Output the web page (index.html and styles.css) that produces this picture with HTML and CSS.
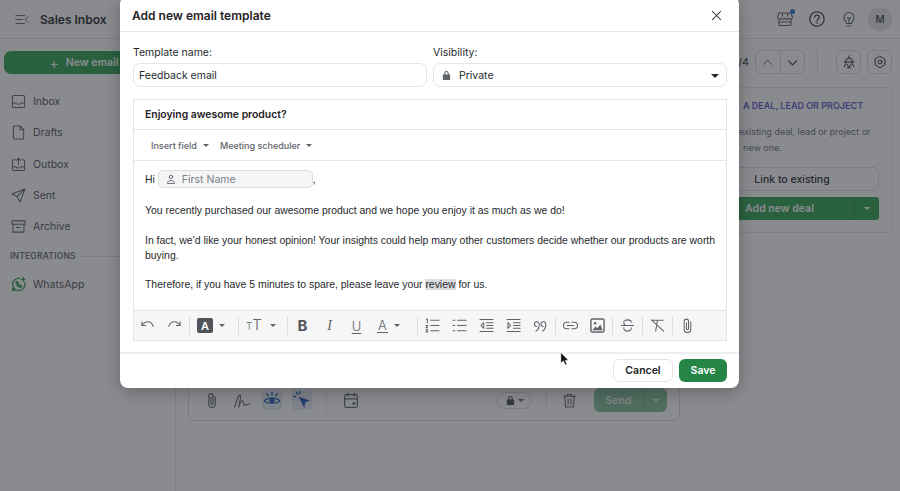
FILE: index.html
```html
<!DOCTYPE html>
<html>
<head>
<title>Sales Inbox</title>
<meta charset="utf-8"/>
<link rel="stylesheet" href="styles.css">
</head>
<body>

<div class="app">
  <header class="topbar">
    <svg class="ico menu-ico" viewBox="0 0 16 12"><path d="M1 1.500h10M1 6h8M1 10.500h10M15 2.500L11.500 6l3.500 3.500"/></svg>
    <span class="app-title">Sales Inbox</span>
    <div class="top-icons">
      <span class="top-btn store-btn">
        <svg class="ico" viewBox="0 0 18 18"><path d="M3 3h12l1.500 4.500a2 2 0 0 1-3.700.6 2.200 2.200 0 0 1-3.800 0 2.200 2.200 0 0 1-3.800 0 2 2 0 0 1-3.700-.6zM3 9v5.500a1 1 0 0 0 1 1h10a1 1 0 0 0 1-1V9M3 12h12M6.500 3v3M11.500 3v3"/></svg>
        <i class="store-dot"></i>
      </span>
      <span class="top-btn">
        <svg class="ico help-ico" viewBox="0 0 18 18"><circle cx="9" cy="9" r="7.200"/><path d="M6.800 7.200a2.200 2.200 0 1 1 3.400 1.900c-.8.500-1.200.9-1.200 1.800M9 12.600v.6"/></svg>
      </span>
      <span class="top-btn">
        <svg class="ico" viewBox="0 0 18 18"><path d="M6.500 13.500c0-2-2.500-3-2.500-6a5 5 0 0 1 10 0c0 3-2.500 4-2.500 6zM7 16h4M7.500 7.500L9 9l1.500-1.500M9 9v4"/></svg>
      </span>
      <span class="avatar">M</span>
    </div>
  </header>

  <div class="content">
    <nav class="sidebar">
      <a class="new-email"><span class="plus">+</span>New email</a>
      <ul class="nav-list">
        <li>
          <svg class="ico" viewBox="0 0 16 16"><path d="M1.500 3a1.500 1.500 0 0 1 1.500-1.500h10A1.500 1.500 0 0 1 14.500 3v10a1.500 1.500 0 0 1-1.500 1.500H3A1.500 1.500 0 0 1 1.500 13zM1.500 9.500h3.500c.8 2 5.200 2 6 0h3.500"/></svg>
          Inbox
        </li>
        <li>
          <svg class="ico" viewBox="0 0 16 16"><path d="M2.500 2.500a1.500 1.500 0 0 1 1.500-1.500h5.500l4 4v8.500a1.500 1.500 0 0 1-1.500 1.500H4a1.500 1.500 0 0 1-1.500-1.500zM9.500 1v4h4"/></svg>
          Drafts
        </li>
        <li>
          <svg class="ico" viewBox="0 0 16 16"><path d="M4.500 3H3a1.500 1.500 0 0 0-1.500 1.500V13A1.500 1.500 0 0 0 3 14.500h10a1.500 1.500 0 0 0 1.500-1.500V4.500A1.500 1.500 0 0 0 13 3h-1.500M1.500 10.500h3.500c.8 1.600 5.200 1.600 6 0h3.500M8 8.500V1.500M5.800 3.500L8 1.300l2.200 2.200"/></svg>
          Outbox
        </li>
        <li>
          <svg class="ico" viewBox="0 0 16 16"><path d="M15 1L1 6.500l5.500 2.500L9.500 15zM15 1L6.500 9"/></svg>
          Sent
        </li>
        <li>
          <svg class="ico" viewBox="0 0 16 16"><path d="M1 2h14v3.500H1zM2.200 5.500V14h11.600V5.500M6 9h4"/></svg>
          Archive
        </li>
      </ul>
      <div class="nav-label"><span>INTEGRATIONS</span><i></i></div>
      <div class="nav-whatsapp">
        <svg class="ico wa-ico" viewBox="0 0 16 16"><path d="M9 1.500a6.500 6.500 0 1 0 5.400 4.300M1.500 14.500l1-3.400M1.500 14.500l3.500-1M5.500 5.500c0 3 2.500 5.500 5 5.500l1-1.500-1.800-1-.8.700c-.8-.4-1.300-1-1.600-1.700l.7-.8-1-1.800zM13 .5v4M11 2.500h4"/></svg>
        WhatsApp
      </div>
    </nav>

    <main class="center">
      <div class="composer">
        <div class="composer-bar">
          <svg class="ico bar-ico" viewBox="0 0 16 16"><path d="M11 4.500v7a3 3 0 0 1-6 0V3.500a2 2 0 0 1 4 0v7a1 1 0 0 1-2 0V5"/></svg>
          <svg class="ico bar-ico" viewBox="0 0 16 16"><path d="M1 14c2-5 3-11 5-11 1.500 0 0 5-1 11 1-3 2.500-6 3.500-6s.5 3 1.500 4 3 0 5-1"/></svg>
          <span class="hl-ico">
            <svg class="ico blue-ico" viewBox="0 0 16 16"><path d="M1 9c3-3.500 11-3.500 14 0-3 2.500-11 2.500-14 0zM8 1.500v2M3.500 2.500l1 2M12.500 2.500l-1 2"/><circle class="blue-fill" cx="8" cy="8.300" r="2.300"/></svg>
          </span>
          <span class="hl-ico">
            <svg class="ico blue-ico" viewBox="0 0 16 16"><path class="blue-fill" d="M5 5l10 3.500-4 1.500-1 5z"/><path d="M3 1l1 2M.5 4.500l2 .7M6 .5v2"/></svg>
          </span>
          <i class="bar-sep"></i>
          <svg class="ico bar-ico" viewBox="0 0 16 16"><path d="M2 4a1.500 1.500 0 0 1 1.500-1.500h9A1.500 1.500 0 0 1 14 4v9a1.500 1.500 0 0 1-1.500 1.500h-9A1.500 1.500 0 0 1 2 13zM2 6.500h12M5 1v3M11 1v3"/><rect class="dark-fill" x="9.500" y="9.500" width="2.500" height="2.500"/></svg>
          <span class="bar-space"></span>
          <span class="lock-pill">
            <svg class="lock-ico" viewBox="0 0 12 12"><path d="M3.500 5V3.500a2.500 2.500 0 0 1 5 0V5H10v6H2V5zM4.800 5h2.400V3.500a1.200 1.200 0 0 0-2.400 0z"/></svg>
            <i class="caret"></i>
          </span>
          <i class="bar-sep"></i>
          <svg class="ico bar-ico trash-ico" viewBox="0 0 16 16"><path d="M1.500 3.500h13M5.500 3.500V1.500h5v2M3 3.500l.7 11.500h8.600L13 3.500M6.500 6.500V12M9.500 6.500V12"/></svg>
          <div class="send-btn"><span class="send-label">Send</span><span class="send-drop"><i class="caret"></i></span></div>
        </div>
      </div>
    </main>

    <aside class="right">
      <div class="right-tools">
        <span class="pager-num">/4</span>
        <div class="pager">
          <span><svg class="ico" viewBox="0 0 12 12"><path d="M1.500 8L6 3.500 10.500 8"/></svg></span>
          <span><svg class="ico dark-ico" viewBox="0 0 12 12"><path d="M1.500 4L6 8.500 10.500 4"/></svg></span>
        </div>
        <i class="tool-sep"></i>
        <span class="tool-btn"><svg class="ico" viewBox="0 0 16 16"><path d="M4 7.500a4 4 0 0 1 8 0M2.500 8h11M4.500 8v2l-2 3.500M11.500 8v2l2 3.500M6 11a2 2 0 0 0 4 0M6 14.500h4M8 1v2"/></svg></span>
        <span class="tool-btn"><svg class="ico" viewBox="0 0 16 16"><path d="M8 1.500l5.600 3.200v6.600L8 14.500l-5.600-3.200V4.700z"/><circle cx="8" cy="8" r="2.200"/></svg></span>
      </div>
      <div class="link-panel">
        <h4>A DEAL, LEAD OR PROJECT</h4>
        <p>existing deal, lead or project or<br><span class="indent">new one.</span></p>
        <a class="link-btn">Link to existing</a>
        <div class="deal-btn"><span class="deal-main">Add new deal</span><span class="deal-drop"><i class="caret"></i></span></div>
      </div>
    </aside>
  </div>
</div>

<div class="overlay"></div>

<div class="modal">
  <div class="modal-head">
    <h2>Add new email template</h2>
    <svg class="ico close-ico" viewBox="0 0 12 12"><path d="M1.500 1.500l9 9M10.500 1.500l-9 9"/></svg>
  </div>

  <div class="modal-body">
    <div class="form-row">
      <div class="field field-name">
        <label>Template name:</label>
        <div class="input">Feedback email</div>
      </div>
      <div class="field field-vis">
        <label>Visibility:</label>
        <div class="input input-select">
          <svg class="lock-ico" viewBox="0 0 12 12"><path d="M3.500 5V3.500a2.500 2.500 0 0 1 5 0V5H10v6H2V5zM4.800 5h2.400V3.500a1.200 1.200 0 0 0-2.400 0z"/></svg>
          <span>Private</span>
          <i class="caret caret-dark"></i>
        </div>
      </div>
    </div>

    <div class="editor">
      <div class="subject">Enjoying awesome product?</div>
      <div class="insert-bar">
        <span class="insert-item">Insert field<i class="caret"></i></span>
        <span class="insert-item">Meeting scheduler<i class="caret"></i></span>
      </div>
      <div class="editor-text">
        <div class="hi-row">
          <span>Hi</span>
          <span class="chip">
            <svg class="ico chip-ico" viewBox="0 0 12 12"><circle cx="6" cy="3.500" r="2"/><path d="M1.800 11c0-2 1.500-3.200 4.200-3.200s4.200 1.200 4.200 3.200z"/></svg>
            First Name
          </span>
          <span>,</span>
        </div>
        <p>You recently purchased our awesome product and we hope you enjoy it as much as we do!</p>
        <p>In fact, we’d like your honest opinion! Your insights could help many other customers decide whether our products are worth buying.</p>
        <p>Therefore, if you have 5 minutes to spare, please leave your <span class="mark">review</span> for us.</p>
      </div>
      <div class="format-bar">
        <span class="fbtn"><svg class="ico" viewBox="0 0 16 16"><path d="M2 4v4h4M2 8c2-3 4-4 6.500-4s4.500 1.500 5.500 5"/></svg></span>
        <span class="fbtn"><svg class="ico" viewBox="0 0 16 16"><path d="M14 4v4h-4M14 8c-2-3-4-4-6.500-4S3 5.500 2 9"/></svg></span>
        <i class="fsep"></i>
        <span class="fbtn fbtn-wide"><span class="a-box">A</span><i class="caret"></i></span>
        <i class="fsep"></i>
        <span class="fbtn fbtn-wide"><span class="tt"><small>T</small>T</span><i class="caret"></i></span>
        <i class="fsep"></i>
        <span class="fbtn fmt-b">B</span>
        <span class="fbtn fmt-i">I</span>
        <span class="fbtn fmt-u">U</span>
        <span class="fbtn fbtn-wide"><span class="fmt-a">A</span><i class="caret"></i></span>
        <i class="fsep"></i>
        <span class="fbtn"><svg class="ico" viewBox="0 0 16 16"><path d="M6 2.500h9M6 8h9M6 13.500h9M1.500 1.500l1-.5v4M1 8h2L1 10.500h2M1 12.500h2L2 13.500l1 1.500H1"/></svg></span>
        <span class="fbtn"><svg class="ico" viewBox="0 0 16 16"><path d="M6 2.500h9M6 8h9M6 13.500h9M1 2.500h2M1 8h2M1 13.500h2"/></svg></span>
        <span class="fbtn"><svg class="ico" viewBox="0 0 16 16"><path d="M1 1.500h14M8 5h7M8 8h7M8 11h7M1 14.500h14M5 5L2 8l3 3z"/></svg></span>
        <span class="fbtn"><svg class="ico" viewBox="0 0 16 16"><path d="M1 1.500h14M8 5h7M8 8h7M8 11h7M1 14.500h14M2 5l3 3-3 3z"/></svg></span>
        <span class="fbtn"><svg class="ico" viewBox="0 0 16 16"><path d="M3 14c1.500-.5 3-2 3.500-5M3.800 9a2.500 2.500 0 1 1 2.700-2.700c.2 1 0 2 0 2.700M10 14c1.500-.5 3-2 3.500-5M10.800 9a2.500 2.500 0 1 1 2.700-2.700c.2 1 0 2 0 2.700"/></svg></span>
        <i class="fsep"></i>
        <span class="fbtn"><svg class="ico" viewBox="0 0 16 16"><path d="M6.500 4.500H4a3.500 3.500 0 0 0 0 7h2.500M9.500 4.500H12a3.500 3.500 0 0 1 0 7H9.500M4.500 8h7"/></svg></span>
        <span class="fbtn"><svg class="ico img-ico" viewBox="0 0 16 16"><rect x="1" y="1" width="14" height="14" rx="1.500"/><circle class="dark-fill" cx="5.500" cy="5.500" r="1.300"/><path class="dark-fill" d="M2.500 13l3.500-4 2 2 3-4 2.500 6z"/></svg></span>
        <i class="fsep"></i>
        <span class="fbtn"><svg class="ico" viewBox="0 0 16 16"><path d="M12 4.500C12 2.800 10.200 2 8 2S4 3 4 5c0 1.200.8 2.200 2 3M1.500 8h13M12 10.500c0 2-1.800 3.500-4 3.500s-4-1.200-4-3.500"/></svg></span>
        <i class="fsep"></i>
        <span class="fbtn"><svg class="ico" viewBox="0 0 16 16"><path d="M2 2.500h12M8 2.500L6 14M1.500 2l13 12"/></svg></span>
        <i class="fsep"></i>
        <span class="fbtn"><svg class="ico" viewBox="0 0 16 16"><path d="M11.500 4v8a3.500 3.500 0 0 1-7 0V3.500a2.300 2.300 0 0 1 4.600 0v8a1.100 1.100 0 0 1-2.200 0V5"/></svg></span>
      </div>
    </div>
  </div>

  <div class="modal-foot">
    <a class="btn btn-cancel">Cancel</a>
    <a class="btn btn-save">Save</a>
  </div>
</div>

<svg class="pointer" viewBox="0 0 10 15"><path d="M1 .5v11.500l2.800-2.500 2 4.500 1.800-.8-2-4.400h3.700z"/></svg>

</body>
</html>
```

FILE: styles.css
```css
* { box-sizing:border-box; }
html, body { height:100%; }
body {
    margin:0;
    overflow:hidden;
    font-family:"Inter", "Liberation Sans", sans-serif;
    font-size:11px;
    color:#26292c;
    background:#fff;
}
ul { list-style:none;margin:0;padding:0; }
h2, h4, p { margin:0; }
i { display:block; }

.ico { display:block;fill:none;stroke:#5f646b;stroke-width:1.1;stroke-linecap:round;stroke-linejoin:round; }
.dark-fill { fill:#5f646b;stroke:none; }
.caret { width:0;height:0;border-left:3.500px solid transparent;border-right:3.500px solid transparent;border-top:3.500px solid #5f646b; }
.caret-dark { border-left-width:4px;border-right-width:4px;border-top:4px solid #26292c; }

/* app behind the dialog */
.app { height:491px;display:flex;flex-direction:column; }
.topbar { height:39px;flex:none;display:flex;align-items:center;padding:0 8px 0 15px;border-bottom:1px solid #e4e5e7; }
.menu-ico { width:14px;height:11px;margin-right:11px; }
.app-title { font-size:12px;font-weight:600; }
.top-icons { margin-left:auto;display:flex;align-items:center;gap:10px; }
.top-btn { position:relative;width:22px;height:22px;display:flex;align-items:center;justify-content:center; }
.top-btn .ico { width:18px;height:18px; }
.top-btn .help-ico { stroke:#26292c; }
.store-dot { position:absolute;right:1px;top:1px;width:5px;height:5px;border-radius:50%;background:#2b6fd6; }
.avatar { width:24px;height:24px;margin-left:-2px;border-radius:50%;background:#e6e7e9;display:flex;align-items:center;justify-content:center;font-size:10px;font-weight:600;color:#4a4e54; }

.content { flex:1;display:flex;min-height:0; }

.sidebar { width:176px;flex:none;border-right:1px solid #e4e5e7;padding:12px 0 0 4px; }
.new-email { display:flex;align-items:center;justify-content:center;height:23px;border-radius:7px;background:#2ca352;color:#fff;font-size:10.500px;font-weight:600;margin-right:11px;gap:7px; }
.plus { font-size:14px;font-weight:400;line-height:1; }
.nav-list { margin-top:12px; }
.nav-list li { height:31.250px;display:flex;align-items:center;gap:7px;padding-left:7px;font-size:10.500px;color:#50545a; }
.nav-list .ico { width:15px;height:15px; }
.nav-label { display:flex;align-items:center;gap:6px;margin-top:9px;padding:0 0 0 6px;font-size:8.500px;font-weight:600;letter-spacing:.2px;color:#6a6f76; }
.nav-label i { flex:1;height:1px;background:#dcdde0; }
.nav-whatsapp { display:flex;align-items:center;gap:7px;margin-top:16px;padding-left:7px;font-size:10.500px;color:#50545a; }
.wa-ico { width:15px;height:15px;stroke:#2a9d4e;stroke-width:1.400; }

.center { flex:1;min-width:0;display:flex;flex-direction:column;justify-content:flex-end;padding:0 48px 70px 12px; }
.composer { height:120px;border:1px solid #dcdde0;border-radius:0 0 6px 6px;display:flex;flex-direction:column;justify-content:flex-end; }
.composer-bar { display:flex;align-items:center;height:32px;margin-bottom:4px;padding-left:13px;gap:10px; }
.bar-ico { width:20px;height:17px; }
.hl-ico { width:20px;height:20px;background:#e4ebf7;border-radius:3px;display:flex;align-items:center;justify-content:center; }
.blue-ico { width:18px;height:18px;stroke:#1c58b5; }
.blue-fill { fill:#1c58b5;stroke:none; }
.bar-sep { width:1px;height:24px;background:#e4e5e7;margin:0 4px; }
.bar-space { flex:1; }
.lock-pill { display:flex;align-items:center;justify-content:center;gap:2px;width:36px;height:17px;border:1px solid #dcdde0;border-radius:9px; }
.lock-pill .caret { border-width:3px 3px 0; }
.lock-ico { width:11px;height:11px;fill:#4a4e54; }
.trash-ico { width:15px;height:17px;margin:0 7.500px 0 .5px; }
.send-btn { width:73px;height:24px;display:flex;margin-right:12px;background:#82c09a;border-radius:6px;color:#e0efe5;font-size:10.500px;font-weight:600; }
.send-label { flex:1;display:flex;align-items:center;justify-content:center;border-right:1px solid #6fae88; }
.send-drop { width:23px;display:flex;align-items:center;justify-content:center; }
.send-drop .caret { border-top-color:#e0efe5; }

.right { width:172px;flex:none;padding:11px 8px 0 0; }
.right-tools { display:flex;align-items:center;justify-content:flex-end;height:24px; }
.pager-num { margin-right:6px;color:#4a4e54;font-size:10.500px;font-weight:500; }
.pager { display:flex;width:50px;height:24px;border:1px solid #dcdde0;border-radius:6px; }
.pager span { flex:1;display:flex;align-items:center;justify-content:center; }
.pager span + span { border-left:1px solid #dcdde0; }
.pager .ico { width:11px;height:11px;stroke:#8a8e94; }
.pager .dark-ico { stroke:#26292c; }
.tool-sep { width:1px;height:24px;background:#dcdde0;margin:0 12px; }
.tool-btn { width:25px;height:24px;border:1px solid #dcdde0;border-radius:6px;display:flex;align-items:center;justify-content:center;margin-left:6px; }
.tool-btn .ico { width:14px;height:14px;stroke:#26292c; }
.link-panel { margin-top:13px;height:146px;border:1px solid #e4e5e7;border-radius:5px;padding:12px 12px 0 14px; }
.link-panel h4 { font-size:9px;font-weight:600;color:#5a55c8;line-height:12px; }
.link-panel p { margin:12px 0 0 -4px;font-size:9px;line-height:16px;color:#6a6f76;white-space:nowrap; }
.indent { padding-left:4px; }
.link-btn { display:flex;align-items:center;justify-content:center;height:24px;margin:11px 0 0 -38px;border:1px solid #dcdde0;border-radius:6px;font-size:10.500px;font-weight:500; }
.deal-btn { display:flex;height:23px;margin:6px 0 0 -38px;background:#2ca352;border-radius:3px;color:#fff;font-size:10.500px;font-weight:600; }
.deal-main { flex:1;display:flex;align-items:center;justify-content:center;border-right:1px solid #258a45; }
.deal-drop { width:24px;display:flex;align-items:center;justify-content:center; }
.deal-drop .caret { border-top-color:#fff; }

/* dim layer and dialog */
.overlay { position:absolute;left:0;top:0;width:100%;height:100%;background:rgba(38,41,48,.54); }
.modal { position:absolute;left:120px;top:-4px;width:619px;height:392px;background:#fff;border-radius:8px;box-shadow:0 4px 16px rgba(0,0,0,.25);display:flex;flex-direction:column; }
.modal-head { height:36px;flex:none;display:flex;align-items:center;justify-content:space-between;padding:4px 17px 0 12px;border-bottom:1px solid #e4e5e7; }
.modal-head h2 { font-size:12px;font-weight:600;color:#1f2226; }
.close-ico { width:11px;height:11px;stroke:#3f4349; }
.modal-body { flex:1;padding:13px 12px 0 13px; }
.form-row { display:flex;gap:6px; }
.field-name { width:294px; }
.field-vis { flex:1; }
.field label { display:block;height:14px;line-height:16px;font-size:10.500px;color:#26292c; }
.input { display:flex;align-items:center;height:24px;margin-top:4px;padding:1px 0 0 5px;border:1px solid #e4e5e7;border-radius:7px;font-size:10.500px;color:#26292c; }
.input-select { gap:7px;padding:1px 7px 0 7px; }
.input-select .lock-ico { fill:#5f646b; }
.input-select .caret { margin-left:auto; }

.editor { margin-top:12px;border:1px solid #e4e5e7; }
.subject { height:30px;display:flex;align-items:center;padding-left:11px;font-size:10.400px;font-weight:600;color:#1f2226;border-bottom:1px solid #e4e5e7; }
.insert-bar { height:31px;display:flex;align-items:center;gap:11px;padding-left:17px;border-bottom:1px solid #e4e5e7; }
.insert-item { display:flex;align-items:center;gap:6px;font-size:9px;font-weight:500;color:#5f646b; }
.editor-text { height:149px;padding:9px 8px 0 11px;font-family:"Liberation Sans", sans-serif;font-size:10.430px;line-height:15px;color:#26292c; }
.editor-text p { margin-bottom:14.500px; }
.hi-row { display:flex;align-items:center;height:18px;margin-bottom:15px; }
.chip { display:flex;align-items:center;width:155px;height:18px;margin-left:3px;padding-left:7px;background:#f5f5f6;border:1px solid #dcdde0;border-radius:5px;color:#7a7f86;gap:6px;font-family:"Inter", sans-serif;font-size:10.500px; }
.chip-ico { width:10px;height:10px; }
.mark { background:#dcdde0; }

.format-bar { height:30px;display:flex;align-items:center;background:#f6f6f7;border-top:1px solid #e4e5e7; }
.fbtn { width:27px;height:20px;flex:none;display:flex;align-items:center;justify-content:center; }
.fbtn .ico { width:15px;height:15px; }
.fbtn .img-ico { stroke-width:1.500; }
.fbtn-wide { width:46px;justify-content:flex-start;gap:6px;padding-left:6px; }
.fsep { width:1px;height:18px;margin:0 1px;background:#dcdde0;flex:none; }
.a-box { width:16px;height:15px;background:#50545a;color:#fff;border-radius:2px;display:flex;align-items:center;justify-content:center;font-size:11px;font-weight:600; }
.tt { width:18px;font-size:15px;font-weight:300;line-height:15px;color:#5f646b; }
.tt small { font-size:10px; }
.fmt-b { font-size:15px;font-weight:700;color:#50545a; }
.fmt-i { font-size:14px;color:#5f646b;font-style:italic;font-family:"Liberation Serif", serif; }
.fmt-u { font-size:13px;font-weight:300;color:#5f646b;text-decoration:underline;text-underline-offset:2px; }
.fmt-a { font-size:13px;font-weight:300;color:#5f646b;border-bottom:1.500px solid #5f646b;line-height:14px;padding:0 1px;margin-left:1px; }

.modal-foot { height:36px;flex:none;display:flex;justify-content:flex-end;align-items:center;gap:6px;padding:0 12px 2px;border-top:2px solid #eeeff0; }
.btn { height:23px;display:flex;align-items:center;justify-content:center;border-radius:6px;font-size:10.500px;font-weight:600; }
.btn-cancel { width:60px;border:1px solid #e4e5e7;color:#1f2226; }
.btn-save { width:48px;background:#258547;color:#fff; }

.pointer { position:absolute;left:560px;top:352px;width:9px;height:14px;fill:#111;stroke:#fff;stroke-width:.4; }
```
